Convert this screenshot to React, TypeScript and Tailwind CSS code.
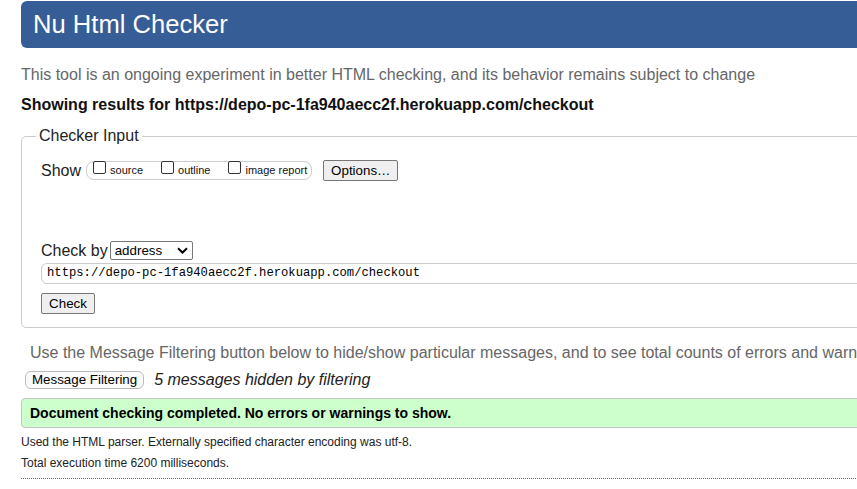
import React from 'react';

const sans = { fontFamily: '"Liberation Sans", Arial, sans-serif' };

const Checkbox: React.FC<{ label: string }> = ({ label }) => (
    <label className="flex items-end gap-[4px]">
        <input
            type="checkbox"
            className="appearance-none m-0 mb-[3px] w-[13px] h-[13px] border border-[#333] rounded-[2px] bg-white"
        />
        <span className="text-[11px] leading-[13px] text-[#111]">{label}</span>
    </label>
);

const App: React.FC = () => {
    return (
        <div className="w-[857px] h-[489px] overflow-hidden bg-white text-[#111]" style={sans}>
            <div className="w-[1000px] pl-[21px] pt-px">
                <header className="h-[47px] bg-[#365d95] rounded-[6px] pl-[12px] flex items-center">
                    <h1 className="text-white text-[25.6px] leading-none">Nu Html Checker</h1>
                </header>

                <p className="mt-[18px] text-[16px] leading-[18px] text-[#666]">
                    This tool is an ongoing experiment in better HTML checking, and its behavior remains subject to change
                </p>
                <p className="mt-[12px] text-[16px] leading-[18px] font-bold text-[#111]">
                    Showing results for https://depo-pc-1fa940aecc2f.herokuapp.com/checkout
                </p>

                <fieldset className="mt-[13px] border border-[#ccc] rounded-[5px] pl-[19px] pr-[19px] pb-[13px]">
                    <legend className="-ml-[5px] px-[3px] text-[16px] leading-[18px] text-[#222]">Checker Input</legend>

                    <div className="mt-[15px] flex items-center h-[21px]">
                        <span className="text-[16px] leading-[18px] text-[#222]">Show</span>
                        <div className="ml-[5px] h-[19px] border border-[#ccc] rounded-[8px] pl-[6px] pr-[4px] flex items-end gap-[18px] pb-[2px]">
                            <Checkbox label="source" />
                            <Checkbox label="outline" />
                            <Checkbox label="image report" />
                        </div>
                        <button className="ml-[11px] h-[21px] w-[75px] bg-[#efefef] border border-[#767676] rounded-[2px] text-[13.33px] text-black">
                            Options…
                        </button>
                    </div>

                    <div className="mt-[60px] flex items-center h-[19px]">
                        <span className="text-[16px] leading-[18px] text-[#222]">Check by</span>
                        <div className="ml-[2px] w-[83px] h-[19px] border border-[#767676] rounded-[2px] bg-white flex items-center justify-between pl-[4px] pr-[4px]">
                            <span className="text-[13.33px] leading-none text-black">address</span>
                            <svg width="11" height="7" viewBox="0 0 11 7" fill="none">
                                <path d="M1 1.2 L5.5 5.5 L10 1.2" stroke="#000" strokeWidth="2" />
                            </svg>
                        </div>
                    </div>

                    <div className="mt-[3px] h-[21px] border border-[#ccc] rounded-[6px] pl-[5px] flex items-center">
                        <span className="text-[12.2px] leading-none text-black" style={{ fontFamily: '"Liberation Mono", "DejaVu Sans Mono", monospace' }}>
                            https://depo-pc-1fa940aecc2f.herokuapp.com/checkout
                        </span>
                    </div>

                    <button className="mt-[9px] block h-[21px] w-[54px] bg-[#efefef] border border-[#767676] rounded-[2px] text-[13.33px] text-black">
                        Check
                    </button>
                </fieldset>

                <p className="mt-[16px] ml-[9px] whitespace-nowrap text-[16px] leading-[18px] text-[#666]">
                    Use the Message Filtering button below to hide/show particular messages, and to see total counts of errors and warnings.
                </p>

                <div className="mt-[9px] flex items-center gap-[10px] ml-[4px]">
                    <button className="h-[18px] px-[6px] border border-[#bbb] rounded-[6px] bg-[#fafafa] text-[13.33px] leading-none text-black">
                        Message Filtering
                    </button>
                    <span className="italic text-[16px] leading-[18px] text-[#222]">5 messages hidden by filtering</span>
                </div>

                <div className="mt-[9px] h-[30px] bg-[#ccffcc] border border-[#c4c4c4] rounded-[4px] pl-[8px] flex items-center">
                    <span className="font-bold text-[14px] text-black">Document checking completed. No errors or warnings to show.</span>
                </div>

                <p className="mt-[4px] text-[12px] leading-[21px] text-[#222]">
                    Used the HTML parser. Externally specified character encoding was utf-8.
                </p>
                <p className="text-[12px] leading-[21px] text-[#222]">Total execution time 6200 milliseconds.</p>
                <div className="mt-[4px] border-t border-dotted border-[#666]" />
            </div>
        </div>
    );
};

export default App;
